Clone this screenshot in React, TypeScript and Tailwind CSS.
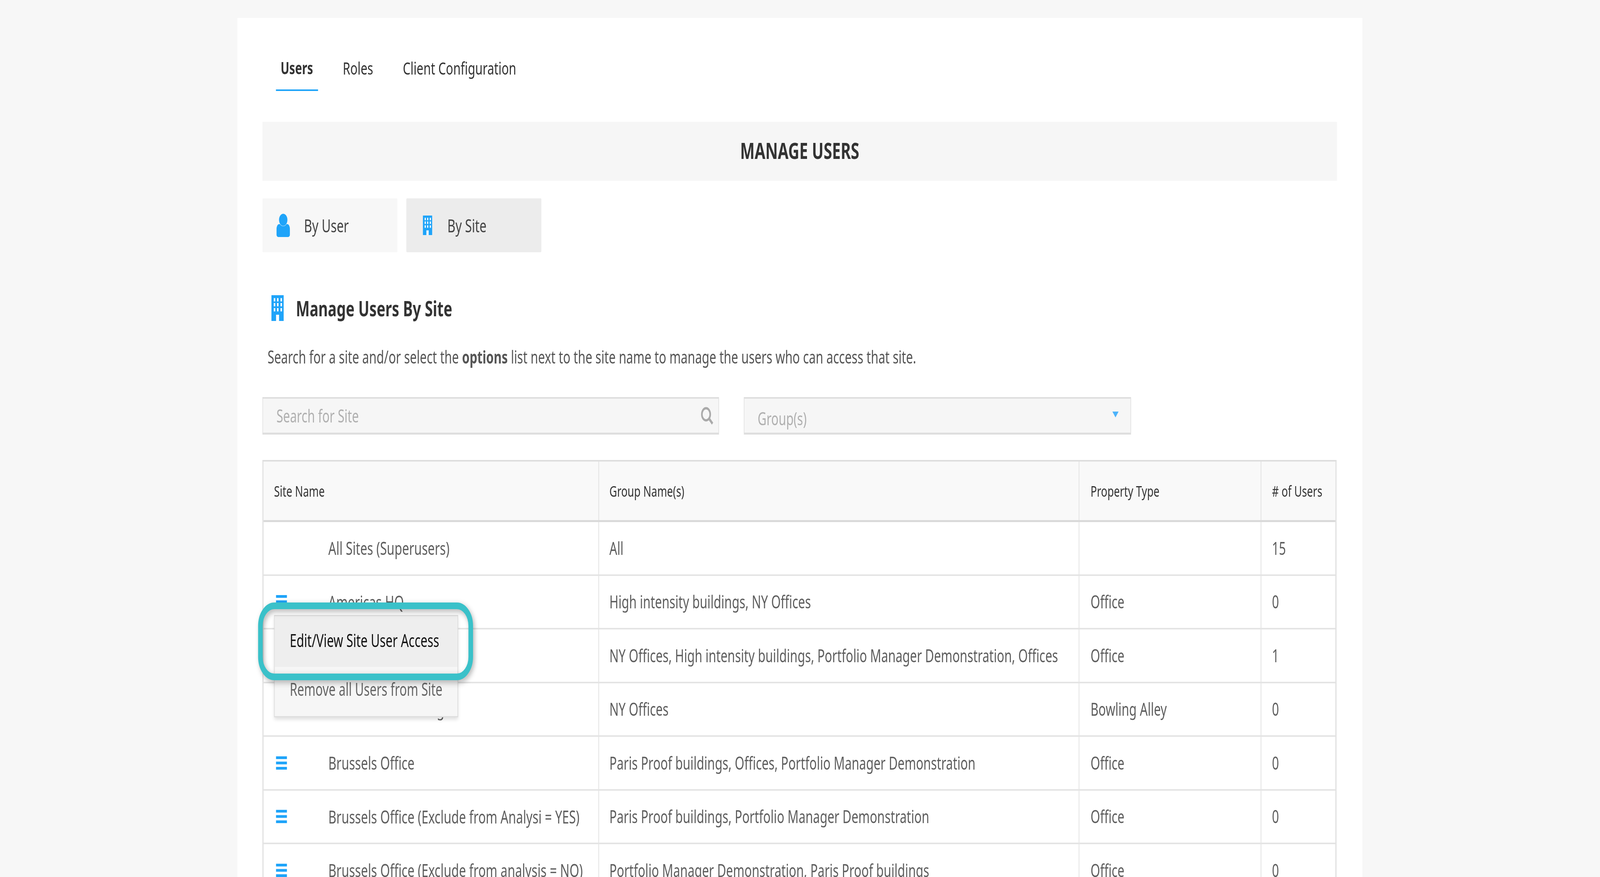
const font = "font-['Noto_Sans',sans-serif]";

function Bars() {
  return (
    <svg width="41" height="34" viewBox="0 0 41 34" className="shrink-0">
      <rect x="0" y="0" width="41" height="7" fill="#1fa4f9" />
      <rect x="0" y="13.5" width="41" height="7" fill="#1fa4f9" />
      <rect x="0" y="27" width="41" height="7" fill="#1fa4f9" />
    </svg>
  );
}

function Building({ w, h }: { w: number; h: number }) {
  const windows = [];
  for (const y of [7.5, 20, 33]) for (const x of [9, 21, 34]) windows.push(<rect key={`${x}-${y}`} x={x} y={y} width="5.5" height="8.5" fill="#fff" />);
  return (
    <svg width={w} height={h} viewBox="0 0 46 66" className="shrink-0">
      <rect x="0" y="0" width="46" height="66" fill="#1fa4f9" />
      {windows}
      <rect x="17.5" y="50" width="11" height="16" fill="#fff" />
    </svg>
  );
}

function UserIcon() {
  return (
    <svg width="50" height="61" viewBox="0 0 50 61" className="shrink-0">
      <circle cx="25" cy="16" r="15.5" fill="#1fa4f9" />
      <path d="M13 27 C18 34 32 34 37 27 L40 27 C46 27 50 33 50 42 L50 53 C50 57 47 60 43 60 L7 60 C3 60 0 57 0 53 L0 42 C0 33 4 27 10 27 Z" fill="#1fa4f9" />
    </svg>
  );
}

const rows = [
  { site: "All Sites (Superusers)", group: "All", type: "", users: "15", icon: false },
  { site: "Americas HQ", group: "High intensity buildings, NY Offices", type: "Office", users: "0", icon: true },
  { site: "Amsterdam Office", group: "NY Offices, High intensity buildings, Portfolio Manager Demonstration, Offices", type: "Office", users: "1", icon: true },
  { site: "Boston Old Building", group: "NY Offices", type: "Bowling Alley", users: "0", icon: true },
  { site: "Brussels Office", group: "Paris Proof buildings, Offices, Portfolio Manager Demonstration", type: "Office", users: "0", icon: true },
  { site: "Brussels Office (Exclude from Analysi = YES)", group: "Paris Proof buildings, Portfolio Manager Demonstration", type: "Office", users: "0", icon: true },
  { site: "Brussels Office (Exclude from analysis = NO)", group: "Portfolio Manager Demonstration, Paris Proof buildings", type: "Office", users: "0", icon: true },
];

export default function App() {
  const fit = window.innerWidth / 5926;
  return (
    <div className="h-[2246px] w-full overflow-hidden bg-[#f7f7f7]">
      <div className={`${font} relative h-[2246px] w-[5926px] origin-top-left overflow-hidden bg-[#f7f7f7]`} style={{ transform: `scaleX(${fit})` }}>
        <div className="ml-[879px] mt-[46px] h-[2200px] w-[4167px] bg-white pl-[93px] pr-[94px]">
          {/* tabs */}
          <div className="flex h-[187px] items-start gap-[110px] pl-[67px] pt-[98px] text-[44.5px] leading-[60px] text-[#333]">
            <div className="relative text-[43px] font-bold">
              Users
              <div className="absolute -left-[17px] -right-[18px] top-[85px] h-[4px] bg-[#1fa4f9]" />
            </div>
            <div>Roles</div>
            <div>Client Configuration</div>
          </div>
          {/* title */}
          <div className="mt-[79px] flex h-[151px] items-center justify-center bg-[#f6f6f6] pb-[3px] text-[57px] font-bold text-[#333]">MANAGE USERS</div>
          {/* toggle */}
          <div className="mt-[45px] flex gap-[33px]">
            <div className="flex h-[138px] w-[500px] items-center gap-[52px] rounded-[3px] bg-[#f7f7f7] pl-[52px] text-[46px] text-[#444]">
              <UserIcon />
              <span>By User</span>
            </div>
            <div className="flex h-[138px] w-[500px] items-center gap-[56px] rounded-[3px] bg-[#ececec] pl-[61px] text-[46px] text-[#444]">
              <Building w={35} h={50} />
              <span>By Site</span>
            </div>
          </div>
          {/* heading */}
          <div className="mt-[110px] flex items-center gap-[45px] pl-[33px]">
            <Building w={46} h={66} />
            <h2 className="text-[54px] font-bold leading-[66px] text-[#333]">Manage Users By Site</h2>
          </div>
          <p className="mt-[62px] pl-[19px] text-[45px] leading-[60px] text-[#555]">
            Search for a site and/or select the <b className="font-bold">options</b> list next to the site name to manage the users who can access that site.
          </p>
          {/* filters */}
          <div className="mt-[73px] flex gap-[92px]">
            <div className="flex h-[96px] w-[1691px] items-center justify-between border-x-[2px] border-b-[5px] border-t-[4px] border-[#dedede] bg-[#f6f6f6] pl-[50px] pr-[19px] text-[45px] text-[#b0b0b0]">
              <span>Search for Site</span>
              <svg width="46" height="46" viewBox="0 0 46 46" fill="none" stroke="#aaaaaa" strokeWidth="6">
                <circle cx="19" cy="19" r="15.5" />
                <path d="M30 30 L43 43" strokeWidth="7" />
              </svg>
            </div>
            <div className="flex h-[96px] w-[1434px] items-center justify-between border-x-[2px] border-b-[5px] border-t-[4px] border-[#dedede] bg-[#f6f6f6] pl-[49px] pr-[44px] text-[45px] text-[#b0b0b0]">
              <span className="pt-[14px]">Group(s)</span>
              <svg width="23" height="15" viewBox="0 0 23 15" className="-mt-[7px]">
                <path d="M0 0 L23 0 L11.5 15 Z" fill="#4cb3fb" />
              </svg>
            </div>
          </div>
          {/* table */}
          <div className="mt-[65px] w-[3978px] border-x-[4px] border-t-[4px] border-[#dedede]">
            <div className="flex h-[155px] border-b-[5px] border-[#d9d9d9] bg-[#f9f9f9] text-[39px] text-[#333]">
              <div className="flex w-[1243px] items-center border-r-[3px] border-[#e4e4e4] pl-[39px]">Site Name</div>
              <div className="flex w-[1779px] items-center border-r-[3px] border-[#e4e4e4] pl-[38px]">Group Name(s)</div>
              <div className="flex w-[674px] items-center border-r-[3px] border-[#e4e4e4] pl-[41px]">Property Type</div>
              <div className="flex flex-1 items-center pl-[39px]">{"# of Users"}</div>
            </div>
            {rows.map((r) => (
              <div key={r.site} className="flex h-[137.5px] border-b-[4px] border-[#e4e4e4] text-[45.3px] text-[#5e5e5e]">
                <div className="flex w-[1243px] items-center border-r-[3px] border-[#e4e4e4] pl-[46px]">
                  <div className="w-[194px] shrink-0">{r.icon ? <Bars /> : null}</div>
                  <span className="whitespace-nowrap text-[45.8px]">{r.site}</span>
                </div>
                <div className="flex w-[1779px] items-center whitespace-nowrap border-r-[3px] border-[#e4e4e4] pl-[38px]">{r.group}</div>
                <div className="flex w-[674px] items-center border-r-[3px] border-[#e4e4e4] pl-[41px]">{r.type}</div>
                <div className="flex flex-1 items-center pl-[39px]">{r.users}</div>
              </div>
            ))}
          </div>
        </div>
        {/* context menu */}
        <div className="absolute left-[1015px] top-[1575px] w-[682px] border-[3px] border-[#dedede] shadow-[0_6px_10px_rgba(0,0,0,0.12)]">
          <div className="flex h-[130px] items-center bg-[#eeeeee] pb-[8px] pl-[55px] text-[45.5px] text-[#111]">Edit/View Site User Access</div>
          <div className="flex h-[126px] items-center bg-[#f6f6f6] pb-[12px] pl-[55px] text-[45px] text-[#666]">Remove all Users from Site</div>
        </div>
        {/* highlight */}
        <div className="absolute left-[956px] top-[1543px] h-[199px] w-[796px] rounded-[60px] border-[17px] border-[#3ac1c9] drop-shadow-[5px_6px_8px_rgba(0,0,0,0.3)]" />
      </div>
    </div>
  );
}
